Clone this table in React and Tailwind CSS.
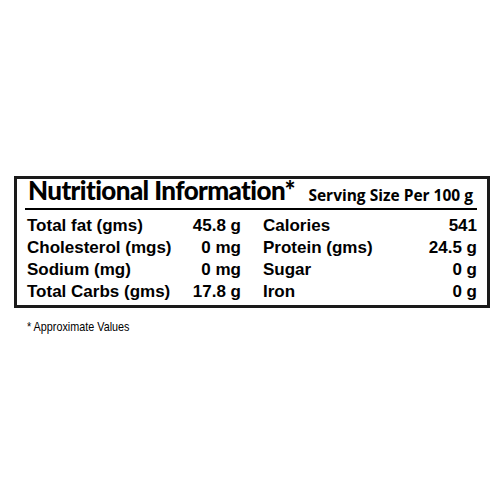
const left = [
  ["Total fat (gms)", "45.8 g"],
  ["Cholesterol (mgs)", "0 mg"],
  ["Sodium (mg)", "0 mg"],
  ["Total Carbs (gms)", "17.8 g"],
];

const right = [
  ["Calories", "541"],
  ["Protein (gms)", "24.5 g"],
  ["Sugar", "0 g"],
  ["Iron", "0 g"],
];

function Column({ rows }) {
  return (
    <div className="flex flex-col">
      {rows.map(([label, value]) => (
        <div key={label} className="flex justify-between h-[22px] items-center whitespace-nowrap">
          <span>{label}</span>
          <span>{value}</span>
        </div>
      ))}
    </div>
  );
}

export default function App() {
  return (
    <div className="w-[500px] h-[500px] bg-white text-black pt-[176px] px-[14px]">
      <div className="w-[476px] border-[3px] border-[#1a1a1a] pl-2 pr-[10px] pb-[2px]">
        <div className="flex items-end justify-between border-b-2 border-black h-[31px] pl-[3px] pr-[4px] pb-[5px] whitespace-nowrap">
          <span
            className="text-[26px] font-black leading-none tracking-[-0.6px]"
            style={{ fontFamily: 'Lato, sans-serif' }}
          >
            Nutritional Information*
          </span>
          <span
            className="text-[15.5px] font-bold leading-none"
            style={{ fontFamily: '"Open Sans", sans-serif' }}
          >
            Serving Size Per 100 g
          </span>
        </div>
        <div
          className="grid grid-cols-2 gap-x-[22px] pt-[5px] pl-[2px] text-[17px] font-bold"
          style={{ fontFamily: '"Liberation Sans", Arial, sans-serif' }}
        >
          <Column rows={left} />
          <Column rows={right} />
        </div>
      </div>
      <div className="mt-[9px] pl-[13px] leading-none">
        <span
          className="inline-block origin-left scale-x-[0.8] text-[13.5px] whitespace-nowrap"
          style={{ fontFamily: '"Liberation Sans", Arial, sans-serif' }}
        >
          * Approximate Values
        </span>
      </div>
    </div>
  );
}
